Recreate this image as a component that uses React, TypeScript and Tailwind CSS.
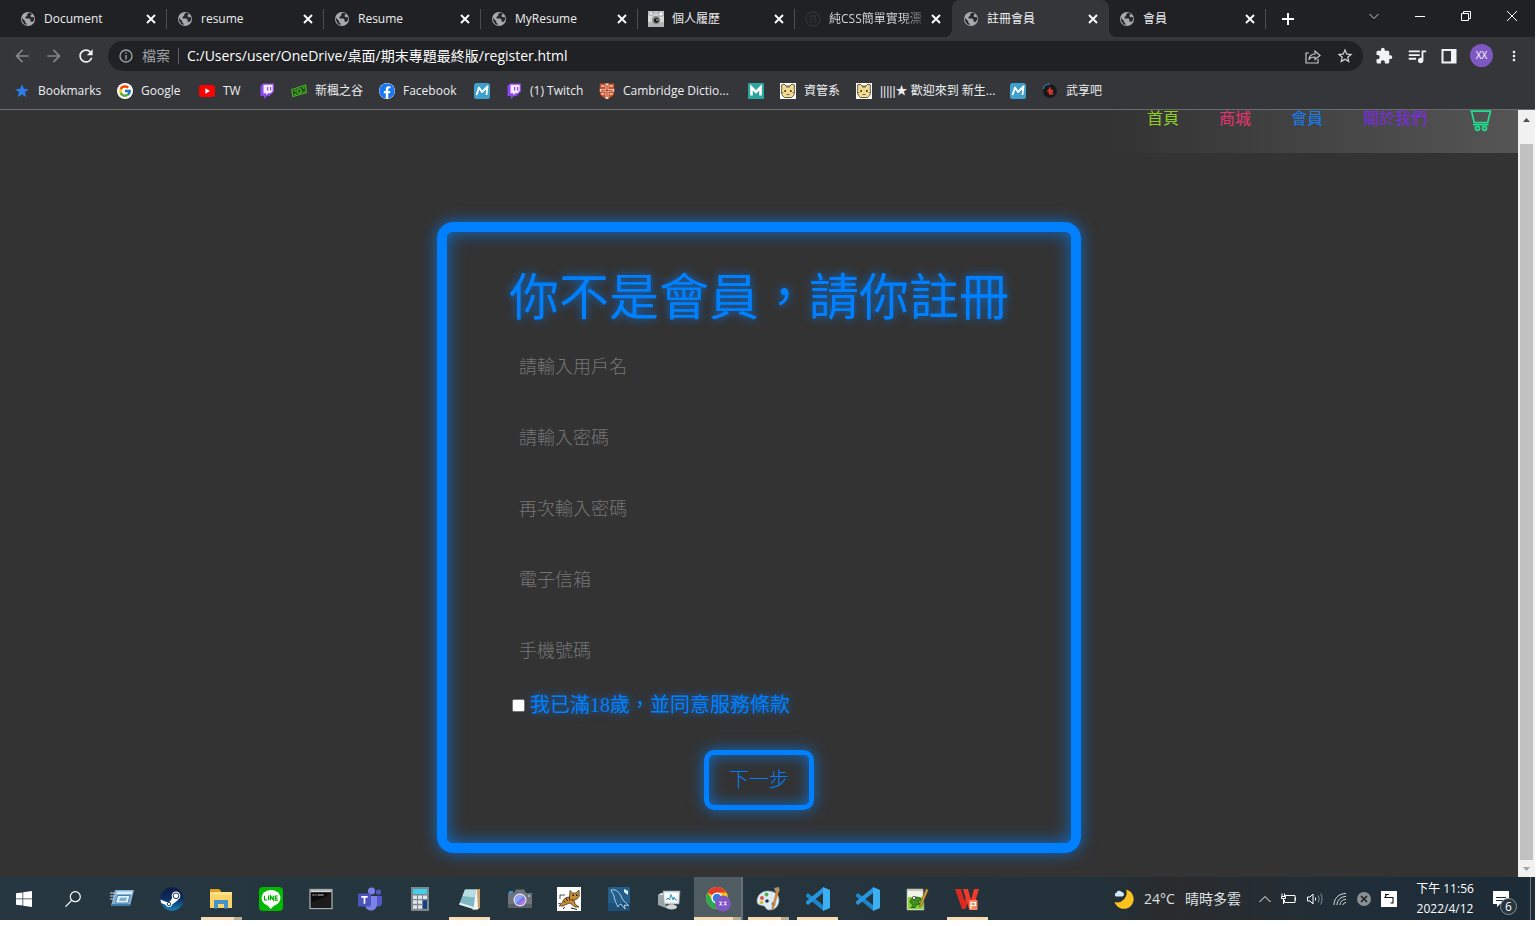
import React from "react";
import { FcGoogle } from "react-icons/fc";
import { FaFacebook } from "react-icons/fa";
import {
  MdArrowBack,
  MdArrowForward,
  MdExtension,
  MdMoreVert,
  MdQueueMusic,
  MdRefresh,
  MdStar,
  MdStarBorder,
} from "react-icons/md";

/* ---------- small drawings ---------- */

const Globe = () => (
  <svg viewBox="0 0 16 16" className="size-4">
    <circle cx="8" cy="8" r="7" fill="#a6a9ad" />
    <path d="M9 1.800 7.200 3.300v1.500L5.500 6v1.500h4l1 1.300v1.700l2 .5 1.700-2.500-.4-2.500-2.300.3-1.300-1.500 1.500-1.300-.4-1.200zM1.900 6.800l3.300 3.400v1.200l1.500 1.300v1.400L4.300 13 2.200 10z" fill="#25272a" />
  </svg>
);

const Cross = () => (
  <svg viewBox="0 0 10 10" className="size-[10px]" stroke="#fff" strokeWidth="1.900">
    <path d="m1 1 8 8M9 1 1 9" />
  </svg>
);

const YouTube = () => (
  <svg viewBox="0 0 16 16" className="size-4">
    <rect x="0" y="2" width="16" height="12" rx="3" fill="#f00" />
    <path d="M6.300 5.300v5.400L11 8z" fill="#fff" />
  </svg>
);

const Camera = () => (
  <svg viewBox="0 0 16 16" className="size-4">
    <rect width="16" height="16" fill="#d8d8d8" />
    <path d="M1 1h4v3H1zM11 1h4v4h-4zM6 0h4v2H6z" fill="#f7f7f7" stroke="#777" strokeWidth=".6" />
    <path d="M0 11h16v5H0z" fill="#b5b5b5" />
    <circle cx="8" cy="9" r="4.2" fill="#8b8b8b" />
    <circle cx="8.3" cy="9.5" r="2.4" fill="#151515" />
    <circle cx="9" cy="9" r=".8" fill="#fff" />
  </svg>
);

const DarkMark = () => (
  <svg viewBox="0 0 16 16" className="size-4" fill="none" stroke="#2f3134" strokeWidth="1.3">
    <circle cx="8" cy="8" r="7" />
    <path d="M4.5 5h7M6 5v7M10 5v7" />
  </svg>
);

const Twitch = () => (
  <svg viewBox="0 0 16 16" className="size-4">
    <path d="M1.500 3 4 .500h11v8L10.500 13H8l-3 3v-3H1.500z" fill="#8d45f0" />
    <path d="M4.500 1.800h9.200v6.300l-2.200 2.200H9.200L7.200 12.300v-2H4.500z" fill="#f2ebff" />
    <path d="M8 4h1.200v3.500H8zM11 4h1.200v3.500H11z" fill="#8d45f0" />
  </svg>
);

const Cash = () => (
  <svg viewBox="0 0 16 16" className="size-4" fill="none" stroke="#4caf2b" strokeWidth="1.300">
    <path d="M.8 6.500 14.500 2l.8 7.500L2 13.500z" fill="#1d4a14" />
    <path d="m3 8 2-.5M3.500 11.500l2-.5M11.500 5l2-.5M12 9l1.700-.5" />
    <circle cx="8.200" cy="8" r="2.100" />
  </svg>
);

const BlueM = () => (
  <svg viewBox="0 0 16 16" className="size-4">
    <rect width="16" height="16" rx="2.500" fill="#3fa0cd" />
    <path d="M2.500 12 5 4.500l3 4.500 5.500-5.500L12.500 12" fill="none" stroke="#fff" strokeWidth="1.800" strokeLinejoin="round" />
  </svg>
);

const TealM = () => (
  <svg viewBox="0 0 16 16" className="size-4">
    <rect width="16" height="16" rx="1" fill="#2aa5a0" />
    <path d="M3.500 12.500v-8L8 9l4.500-4.500v8" fill="none" stroke="#fff" strokeWidth="2.600" />
  </svg>
);

const Shield = () => (
  <svg viewBox="0 0 16 16" className="size-4">
    <path d="M.8.500h14.400v9c0 3-3 5-7.200 6.500C3.800 14.500.8 12.500.8 9.500z" fill="#c9502c" />
    <path d="M6.600.500h2.800V16H6.600zM.8 6h14.400v2.600H.8z" fill="#f4ded2" />
    <path d="M7.400 2h1.200v12H7.400zM2 6.800h12v1H2z" fill="#c03a26" />
    <path d="M2.300 3h3M2.300 11h3M10.700 3h3M10.700 11h3" stroke="#f3d9b0" strokeWidth="1.500" />
  </svg>
);

const Tiger = () => (
  <svg viewBox="0 0 16 16" className="size-4">
    <rect width="16" height="16" fill="#fff" />
    <path d="M1.500 2 4 1l2 2h4l2-2 2.500 1-.3 4c1 3 .3 6.500-2.700 8.500h-7C1.500 12.500.8 9 1.800 6z" fill="#f2db94" stroke="#3a3018" strokeWidth=".8" />
    <path d="M7 3v2M9 3v2M1.800 9.500h1.500M12.700 9.500h1.500" stroke="#5a4720" strokeWidth=".8" />
    <path d="M4.500 7h1.300v2H4.500zM10.200 7h1.300v2h-1.300z" fill="#201808" />
    <path d="M6.500 11.500h3" stroke="#8a5a28" />
  </svg>
);

const RedSwirl = () => (
  <svg viewBox="0 0 16 16" className="size-4">
    <circle cx="8" cy="8" r="7.300" fill="#17181c" stroke="#32353b" strokeWidth="1" />
    <path d="M1.200 6A7 7 0 0 1 8 1" stroke="#3c8fc4" fill="none" />
    <path d="M8 3 6.500 6.500 4.500 8l2 1 .5 3 2.500-.5 2 .500-1-2.500L11.500 7 9 6.500z" fill="#d2342c" />
  </svg>
);

const Windows = () => (
  <svg viewBox="0 0 16 16" className="size-4" fill="#fff">
    <path d="M0 2.300 6.500 1.400v6.200H0zM7.200 1.300 16 0v7.600H7.200zM0 8.300h6.500v6.300L0 13.700zM7.200 8.300H16V16l-8.800-1.300z" />
  </svg>
);

const Search = () => (
  <svg viewBox="0 0 16 16" className="size-4" fill="none" stroke="#fff" strokeWidth="1.200">
    <circle cx="10.300" cy="5.700" r="5" />
    <path d="M6.700 9.300.5 15.700" />
  </svg>
);

const RunWindow = () => (
  <svg viewBox="0 0 24 24" className="size-6">
    <path d="M5 3h19l-4 16H1z" fill="#86b4d8" />
    <path d="M7 4.500h15.500L22 7H6.300z" fill="#d9ecf8" />
    <path d="M7.500 8.500H20l-2 7.500H5.500z" fill="#e8f4fb" stroke="#447fae" />
    <path d="M10 10.500h7l-1 3.500H9z" fill="#7db0d9" />
    <path d="M0 6h5M0 9h4M0 12h3" stroke="#c6ddee" />
    <path d="M1 19h19l.5-2H1.500z" fill="#4177a5" />
  </svg>
);

const Steam = () => (
  <svg viewBox="0 0 24 24" className="size-6">
    <defs>
      <linearGradient id="steamBlue" x1="0" y1="0" x2="0" y2="1">
        <stop offset="0" stopColor="#0f1b45" />
        <stop offset=".5" stopColor="#0d2d63" />
        <stop offset="1" stopColor="#1585bd" />
      </linearGradient>
    </defs>
    <circle cx="12" cy="12" r="11.800" fill="url(#steamBlue)" />
    <path d="M.4 12.500 7 15.200l2.700-.4 3-4.200 5.500 2.500-6 4.300c-.6 3-5.200 3.600-6.400.6L1.200 16z" fill="#fff" />
    <circle cx="16" cy="8.800" r="4.300" fill="#fff" />
    <circle cx="16" cy="8.800" r="2.800" fill="#fff" stroke="#17305f" strokeWidth="1" />
    <circle cx="9" cy="17" r="1.700" fill="none" stroke="#17305f" strokeWidth=".9" />
  </svg>
);

const Folder = () => (
  <svg viewBox="0 0 24 24" className="size-6">
    <path d="M1 2h9l2 2v4H1z" fill="#e0a01e" />
    <path d="M1 5h22v16H1z" fill="#fbd468" />
    <path d="M1 5h22v3H1z" fill="#fddf86" />
    <path d="M5 21.500V13h14v8.500h-4V17H9v4.500z" fill="#4493c9" />
  </svg>
);

const Line = () => (
  <svg viewBox="0 0 24 24" className="size-6">
    <rect width="24" height="24" rx="4" fill="#00b900" />
    <ellipse cx="12" cy="11" rx="9.500" ry="8" fill="#fff" />
    <path d="M8 17.500h8.500L11.500 22z" fill="#fff" />
    <path d="M5.500 8.800v4.200h2.700M9.600 8.500v4.800M11.500 13.300V9l2.800 4V8.700M18.800 9h-2.600v4.200h2.600M16.200 11.100h2.300" fill="none" stroke="#00a800" strokeWidth="1.200" />
  </svg>
);

const Terminal = () => (
  <svg viewBox="0 0 24 24" className="size-6">
    <rect x="1" y="2.500" width="22" height="19" fill="#0a0a0a" stroke="#a9adb0" strokeWidth="1.300" />
    <path d="M1.600 3.200h20.800v2H1.600z" fill="#dcdcdc" />
    <path d="M3.500 8h2M6.500 8h1.200M8.700 8h6" stroke="#cfcfcf" strokeWidth="1" />
    <path d="M2 21V15c6-1 12-4 20-10v16z" fill="#1c1c1c" />
  </svg>
);

const Teams = () => (
  <svg viewBox="0 0 24 24" className="size-6">
    <circle cx="20.500" cy="5" r="2.600" fill="#5059c9" />
    <circle cx="13.500" cy="4" r="3.600" fill="#7b83eb" />
    <path d="M16 9h8v6.500a4 4 0 0 1-8 0z" fill="#5059c9" />
    <path d="M7 9h12v8c0 4-2.500 6.500-6 6.500S7 21 7 17z" fill="#7b83eb" />
    <rect x="0" y="6.500" width="13" height="13" rx="1.300" fill="#4b53bc" />
    <path d="M3.300 9.800h6.400M6.500 9.800v7" stroke="#fff" strokeWidth="1.700" />
  </svg>
);

const Calculator = () => (
  <svg viewBox="0 0 24 24" className="size-6">
    <rect x="3" y="0" width="18" height="24" fill="#7c868d" />
    <rect x="5" y="2" width="14" height="5" fill="#3fd0ee" />
    <path d="M5 8.500h4V12H5zM10 8.500h4V12h-4zM15 8.500h4V12h-4zM5 13.300h4v3.500H5zM10 13.300h4v3.500h-4zM5 18.200h4v3.600H5zM10 18.200h4v3.600h-4z" fill="#dfe6ea" />
    <path d="M15 13.300h4v8.500h-4z" fill="#153f86" />
  </svg>
);

const Notepad = () => (
  <svg viewBox="0 0 24 24" className="size-6">
    <path d="M17 2h5v19l-4 2.500z" fill="#c4a168" />
    <path d="M7 3h12l1 19-5 1z" fill="#f4f6f6" />
    <path d="M7 2.500h11L15.500 22 1 17.500z" fill="#7fbac4" />
    <path d="M7 2.500h11l-1 8L4.500 9z" fill="#b9dde2" />
    <path d="M1 17.500 15.500 22l.3-2L2 15.700z" fill="#e9f1f2" />
  </svg>
);

const CameraApp = () => (
  <svg viewBox="0 0 24 24" className="size-6">
    <path d="M0 6h6l2-3.500h8L18 6h6v15H0z" fill="#6d747a" />
    <path d="M0 17h24v4H0z" fill="#596066" />
    <path d="M1 4h4v2H1z" fill="#2b9be0" />
    <circle cx="12" cy="13" r="6.500" fill="#e8ecf1" />
    <circle cx="12" cy="13" r="5.300" fill="#6f7be8" />
    <path d="M8 16.500a5.300 5.300 0 0 1 7.500-7.300z" fill="#8fa5f8" />
    <path d="M10 17.800a5.300 5.300 0 0 0 7-6.500z" fill="#b873e4" />
    <circle cx="21" cy="9" r=".8" fill="#fff" />
  </svg>
);

const Cat = () => (
  <svg viewBox="0 0 24 24" className="size-6">
    <rect width="24" height="24" fill="#fff" />
    <path d="M13 3.500 15.500 6h3.500l3-3 .3 6-2.300 3-3 1 1 4 4 3h-4l-5-4-4 1.500L6 19H2l3.500-3.500C6 12 9 10 12.500 10z" fill="#c78d35" stroke="#3a2810" strokeWidth=".7" />
    <path d="m9 11 1.500 3M12 10l1 3.500M15 12l1 2M7 14l1.500 1.500" stroke="#2e1d0b" />
    <path d="M15.500 7.500h1.500v1.500h-1.500zM19 7.500h1.500v1.500H19z" fill="#151515" />
    <path d="M3 12V8h5M1 17l3-1" stroke="#222" fill="none" strokeWidth=".8" />
    <path d="m6 22 1.500-2M14 21l6 1.500" stroke="#222" />
  </svg>
);

const MySql = () => (
  <svg viewBox="0 0 24 24" className="size-6">
    <rect x="1" y="0" width="22" height="24" rx="1.500" fill="#245f8c" />
    <path d="M1 16h22v6.500a1.500 1.500 0 0 1-1.500 1.500h-19A1.500 1.500 0 0 1 1 22.500z" fill="#1d5079" />
    <path d="M4 3c4-1 7.500 1.500 9.500 5 1.500 3 2 5.500 5 7.500l3 3-4-.5.500 4-4-5c-2 0-2 2-3 3-2-4-3.500-7-4-11C6.500 7 4.500 5.500 4 3z" fill="none" stroke="#dbe9f4" strokeWidth=".8" />
    <path d="m17 2 4 2v4l-4-3z" fill="#e6f2fa" />
  </svg>
);

const Monitor = () => (
  <svg viewBox="0 0 24 24" className="size-6">
    <path d="M1 8h8v13l-8-3z" fill="#9aa5a9" />
    <path d="m1 8 3-2h7L9 8z" fill="#d7dddf" />
    <path d="M6 4h17l-1 13H7z" fill="#e5eaec" stroke="#8b979d" strokeWidth=".7" />
    <path d="M8 6h13l-.7 9H8.500z" fill="#fafcfd" />
    <path d="m9 13 2-2 1.500 2L14 7.500l2 5.500 1-3 1.500 3H20" fill="none" stroke="#2f94cc" />
    <path d="M12 17h5v2h-5z" fill="#8e999e" />
    <ellipse cx="14.500" cy="20" rx="5.500" ry="2.500" fill="#cfd6d9" />
  </svg>
);

const Chrome = () => (
  <svg viewBox="0 0 26 26" className="size-[26px]">
    <circle cx="12" cy="12" r="11" fill="#fbc116" />
    <path d="M12 12 2.500 6.500A11 11 0 0 1 21.500 6.500H12z" fill="#e33b2e" />
    <path d="M2.500 6.500A11 11 0 0 0 11 23l5-8.500L7 14z" fill="#2da94f" />
    <circle cx="12" cy="12" r="5.600" fill="#fff" />
    <circle cx="12" cy="12" r="4.300" fill="#2f7de1" />
    <circle cx="18" cy="17.500" r="8" fill="#7e57c2" />
    <path d="m14.500 15.500 2.500 4M17 15.500l-2.500 4M19 15.500l2.500 4M21.500 15.500l-2.500 4" stroke="#e6dcf5" strokeWidth="1.100" />
  </svg>
);

const Paint = () => (
  <svg viewBox="0 0 24 24" className="size-6">
    <path d="M12 4c7 0 11 4 11 9s-3 10-10 10c-3 0-3-3-5-4s-7 0-7-5C1 8 6 4 12 4z" fill="#dbeaf3" stroke="#8daec2" strokeWidth=".6" />
    <circle cx="6" cy="11" r="2" fill="#d9534a" />
    <circle cx="10.500" cy="7.500" r="1.900" fill="#4eb04c" />
    <circle cx="5.500" cy="15.500" r="1.800" fill="#e7b62c" />
    <circle cx="17.500" cy="17" r="2" fill="#3678c5" />
    <circle cx="11" cy="14" r="1.800" fill="#25343d" />
    <path d="m21 1 2.500 1.500-6 20-2 .5v-2z" fill="#d2883b" />
    <path d="m18 1 5-1 .5 4-4 1z" fill="#b09066" />
  </svg>
);

const Code = () => (
  <svg viewBox="0 0 24 24" className="size-6">
    <path d="M0 7.800 2 6l15.500 12.500V24L0 9.500z" fill="#1b86cb" />
    <path d="M0 16.200 2 18 17.500 5.500V0L0 14.500z" fill="#2596dd" />
    <path d="M17 0l7 3v18l-7 3z" fill="#3db0f4" />
  </svg>
);

const NotepadPlus = () => (
  <svg viewBox="0 0 24 24" className="size-6">
    <path d="M2 2h16l1 21H2z" fill="#f2f5ec" stroke="#9ba48f" strokeWidth=".7" />
    <path d="M3 10h15l.5 12H3z" fill="#86d233" />
    <path d="M2 2h16v2H2z" fill="#c4cabb" />
    <path d="M5 15c1-5 6-6 10-4l1 2-3 1 2 3-3 .5-2 3H6l2-2z" fill="#3f8e24" stroke="#22500f" strokeWidth=".8" />
    <circle cx="9" cy="11" r="1.600" fill="#fff" stroke="#222" strokeWidth=".7" />
    <path d="M21 1.500 23.500 3 17 18l-2.500 2 .5-3z" fill="#d3a13b" stroke="#4a3511" strokeWidth=".5" />
  </svg>
);

const Wps = () => (
  <svg viewBox="0 0 24 24" className="size-6">
    <path d="M0 2h6l3.500 12L12 7l2 5-3.500 10H7z" fill="#d92a20" />
    <path d="M8 2h5l3 11 3-11h5l-6 20h-4z" fill="#f23a2b" />
    <rect x="14" y="13" width="8.500" height="10" rx="1" fill="#f58a61" />
    <path d="M16 21.500v-6h4.500v3H16" fill="none" stroke="#fff" strokeWidth="1.100" />
  </svg>
);

const Moon = () => (
  <svg viewBox="0 0 20 20" className="size-5">
    <path d="M12 .500a9.800 9.800 0 1 1-11.500 12.500A9.500 9.500 0 0 0 12 .500z" fill="#fcc21e" />
    <path d="M2 7.500a2 2 0 0 1 .5-3.800A2.800 2.800 0 0 1 7.500 3a2.300 2.300 0 0 1 .8 4.500z" fill="#cfe8fa" />
  </svg>
);

const Cart = () => (
  <svg viewBox="0 0 22 22" className="h-[22px] w-[22px]" fill="none" stroke="#1fe08f" strokeWidth="1.700">
    <path d="M.5 1.200h20.500M1.500 1l2.700 11.500h13.500L20.500 1M3 14.700h15.500" />
    <circle cx="7.500" cy="18.300" r="2" />
    <circle cx="14.500" cy="18.300" r="2" />
  </svg>
);

/* ---------- data ---------- */

const tabs: { title: string; icon: React.ReactNode; active?: boolean; line?: boolean; fade?: boolean }[] = [
  { title: "Document", icon: <Globe />, line: true },
  { title: "resume", icon: <Globe />, line: true },
  { title: "Resume", icon: <Globe />, line: true },
  { title: "MyResume", icon: <Globe />, line: true },
  { title: "個人履歷", icon: <Camera />, line: true },
  { title: "純CSS簡單實現漂", icon: <DarkMark />, fade: true },
  { title: "註冊會員", icon: <Globe />, active: true },
  { title: "會員", icon: <Globe />, line: true },
];

const bookmarks: { label?: React.ReactNode; name: string; icon: React.ReactNode; width: string }[] = [
  { name: "Bookmarks", label: "Bookmarks", icon: <MdStar className="size-4 text-[#2b7de9]" />, width: "w-[87px]" },
  { name: "Google", label: "Google", icon: <span className="rounded-full bg-white p-px"><FcGoogle className="size-[14px]" /></span>, width: "w-[66px]" },
  { name: "TW", label: "TW", icon: <YouTube />, width: "w-11" },
  { name: "Twitch", icon: <Twitch />, width: "w-4" },
  { name: "新楓之谷", label: "新楓之谷", icon: <Cash />, width: "w-[72px]" },
  { name: "Facebook", label: "Facebook", icon: <FaFacebook className="size-4 rounded-full bg-white text-[#1877f2]" />, width: "w-[79px]" },
  { name: "M", icon: <BlueM />, width: "w-4" },
  { name: "(1) Twitch", label: "(1) Twitch", icon: <Twitch />, width: "w-[77px]" },
  { name: "Cambridge Dictionary", label: "Cambridge Dictio...", icon: <Shield />, width: "w-[133px]" },
  { name: "M", icon: <TealM />, width: "w-4" },
  { name: "資管系", label: "資管系", icon: <Tiger />, width: "w-[60px]" },
  {
    name: "歡迎來到 新生",
    label: <><span className="font-['Liberation_Sans',sans-serif]">|||||</span>★ 歡迎來到 新生...</>,
    icon: <Tiger />,
    width: "w-[138px]",
  },
  { name: "M", icon: <BlueM />, width: "w-4" },
  { name: "武享吧", label: "武享吧", icon: <RedSwirl />, width: "w-[60px]" },
];

const apps: { name: string; icon: React.ReactNode; open?: boolean; stacked?: boolean; active?: boolean }[] = [
  { name: "Run", icon: <RunWindow /> },
  { name: "Steam", icon: <Steam /> },
  { name: "Explorer", icon: <Folder />, open: true, stacked: true },
  { name: "LINE", icon: <Line /> },
  { name: "Terminal", icon: <Terminal /> },
  { name: "Teams", icon: <Teams /> },
  { name: "Calculator", icon: <Calculator /> },
  { name: "Notepad", icon: <Notepad />, open: true },
  { name: "Camera", icon: <CameraApp /> },
  { name: "Tomcat", icon: <Cat /> },
  { name: "MySQL", icon: <MySql /> },
  { name: "Monitor", icon: <Monitor /> },
  { name: "Chrome", icon: <Chrome />, open: true, stacked: true, active: true },
  { name: "Paint", icon: <Paint />, open: true, stacked: true },
  { name: "VS Code", icon: <Code />, open: true },
  { name: "VS Code 2", icon: <Code /> },
  { name: "Notepad++", icon: <NotepadPlus /> },
  { name: "WPS", icon: <Wps />, open: true },
];

const fields = [
  { id: "username", hint: "請輸入用戶名", type: "text" },
  { id: "password", hint: "請輸入密碼", type: "password" },
  { id: "password-again", hint: "再次輸入密碼", type: "password" },
  { id: "email", hint: "電子信箱", type: "email" },
  { id: "phone", hint: "手機號碼", type: "tel" },
];

/* ---------- browser chrome ---------- */

function TabStrip() {
  return (
    <div className="flex h-[37px] bg-[#202124] pl-[10px]">
      {tabs.map((tab, i) => (
        <div
          key={i}
          className={
            tab.active
              ? "relative flex max-w-[157px] min-w-0 flex-1 items-center rounded-t-lg bg-[#35363a] pr-[11px] pl-[11px] before:absolute before:bottom-0 before:-left-2 before:size-2 before:bg-[radial-gradient(circle_at_0_0,transparent_8px,#35363a_8px)] after:absolute after:-right-2 after:bottom-0 after:size-2 after:bg-[radial-gradient(circle_at_100%_0,transparent_8px,#35363a_8px)]"
              : "flex max-w-[157px] min-w-0 flex-1 items-center pl-[10px]"
          }
        >
          <span className="shrink-0">{tab.icon}</span>
          <span
            className={
              tab.fade
                ? "ml-2 flex-1 overflow-hidden bg-linear-to-r from-[#dfe1e5] from-70% to-[#2a2b2e] bg-clip-text whitespace-nowrap text-transparent"
                : "ml-2 flex-1 overflow-hidden whitespace-nowrap text-[#eceef0]"
            }
          >
            {tab.title}
          </span>
          <button type="button" aria-label={`關閉 ${tab.title}`} className={tab.active ? "shrink-0" : "mr-[11px] shrink-0"}>
            <Cross />
          </button>
          {tab.line && <span className="-ml-px h-5 w-px shrink-0 bg-[#4b4d51]" />}
        </div>
      ))}
      <button type="button" aria-label="新分頁" className="ml-4 self-center">
        <svg viewBox="0 0 12 12" className="size-3" stroke="#fff" strokeWidth="2"><path d="M6 0v12M0 6h12" /></svg>
      </button>
      <div className="ml-auto flex h-8 items-center text-white">
        <button type="button" aria-label="搜尋分頁" className="flex w-[46px] justify-center">
          <svg viewBox="0 0 10 10" className="size-[10px]" fill="none" stroke="#c9cbce"><path d="m.5 3 4.500 4.500L9.500 3" /></svg>
        </button>
        <button type="button" aria-label="最小化" className="flex w-[46px] justify-center">
          <svg viewBox="0 0 10 10" className="size-[10px]" stroke="currentColor"><path d="M0 5.500h10" /></svg>
        </button>
        <button type="button" aria-label="還原" className="flex w-[46px] justify-center">
          <svg viewBox="0 0 10 10" className="size-[10px]" fill="none" stroke="currentColor"><path d="M.5 2.500h7v7h-7zM2.500 2V.500h7v7H8" /></svg>
        </button>
        <button type="button" aria-label="關閉" className="flex w-[46px] justify-center">
          <svg viewBox="0 0 10 10" className="size-[10px]" stroke="currentColor"><path d="m0 0 10 10M10 0 0 10" /></svg>
        </button>
      </div>
    </div>
  );
}

function Toolbar() {
  return (
    <div className="flex h-[37px] items-center bg-[#35363a] pr-[13px] pl-3 text-[#f1f3f4]">
      <button type="button" aria-label="上一頁"><MdArrowBack className="size-5 text-[#84868a]" /></button>
      <button type="button" aria-label="下一頁" className="ml-3"><MdArrowForward className="size-5 text-[#84868a]" /></button>
      <button type="button" aria-label="重新載入" className="ml-3"><MdRefresh className="size-5" /></button>
      <div className="ml-3 flex h-[30px] min-w-0 flex-1 items-center rounded-full bg-[#202124] pr-[9px] pl-[11px] text-sm">
        <svg viewBox="0 0 14 14" className="size-[14px] shrink-0" fill="none" stroke="#9aa0a6" strokeWidth="1.400">
          <circle cx="7" cy="7" r="6" />
          <path d="M7 6v4.500M7 3.300v1.500" />
        </svg>
        <span className="ml-[9px] shrink-0 text-[#9aa0a6]">檔案</span>
        <span className="mx-2 h-4 w-px shrink-0 bg-[#5f6368]" />
        <input
          aria-label="網址"
          defaultValue="C:/Users/user/OneDrive/桌面/期末專題最終版/register.html"
          className="min-w-0 flex-1 bg-transparent text-white outline-none"
        />
        <button type="button" aria-label="分享">
          <svg viewBox="0 0 16 16" className="size-4" fill="none" stroke="#c4c7cb" strokeWidth="1.200">
            <path d="M4 5H1v10h12v-4M4 11c.5-3 2.500-5 6-5V3l5 4.500-5 4V9c-3 0-4.500.5-6 2z" />
          </svg>
        </button>
        <button type="button" aria-label="加入書籤" className="ml-[15px]"><MdStarBorder className="size-[18px] text-[#d5d7da]" /></button>
      </div>
      <div className="ml-3 flex items-center gap-[13px]">
        <button type="button" aria-label="擴充功能"><MdExtension className="size-[18px]" /></button>
        <button type="button" aria-label="媒體"><MdQueueMusic className="size-[22px]" /></button>
        <button type="button" aria-label="側邊面板">
          <svg viewBox="0 0 16 16" className="size-4"><path d="M1.500 2h13v12.500h-13z" fill="none" stroke="#f1f3f4" strokeWidth="2" /><path d="M10 2h5v12.500h-5z" fill="#f1f3f4" /></svg>
        </button>
        <button type="button" aria-label="個人資料" className="size-[23px] rounded-full bg-[#7e57c2] text-[10px] text-white">XX</button>
        <button type="button" aria-label="選單"><MdMoreVert className="size-4" /></button>
      </div>
    </div>
  );
}

function Bookmarks() {
  return (
    <nav aria-label="書籤列" className="flex h-9 items-center gap-4 border-b border-[#6b6c70] bg-[#35363a] pb-px pl-[14px]">
      {bookmarks.map((b, i) => (
        <a key={i} href="#" aria-label={b.name} className={`flex shrink-0 items-center gap-2 whitespace-nowrap text-[#eceef0] ${b.width}`}>
          <span className="flex size-4 shrink-0 items-center justify-center">{b.icon}</span>
          {b.label && <span>{b.label}</span>}
        </a>
      ))}
    </nav>
  );
}

/* ---------- page ---------- */

function Page() {
  return (
    <div className="flex flex-1 bg-[#333]">
      <main className="min-w-0 flex-1">
        <header className="flex h-[43px] justify-end">
          <nav aria-label="主選單" className="flex w-[410px] items-start gap-10 bg-linear-to-r from-[#333] to-[#555] pl-[39px] text-base leading-4">
            <a href="#" className="text-[#8fce22]">首頁</a>
            <a href="#" className="text-[#e8336f]">商城</a>
            <a href="#" className="text-[#137ff5]">會員</a>
            <a href="#" className="text-[#7d2be0]">關於我們</a>
            <a href="#" aria-label="購物車" className="pl-[3px]"><Cart /></a>
          </nav>
        </header>
        <form
          onSubmit={(e) => e.preventDefault()}
          className="mx-auto mt-[69px] mb-6 flex w-full max-w-[644px] flex-col rounded-[16px] border-[10px] border-[#0080ff] px-[62px] pt-[34px] pb-[33px] shadow-[0_0_15px_#0080ffbb,inset_0_0_18px_#0080ffbb]"
        >
          <h1 className="text-center text-[50px] leading-[60px] font-normal whitespace-nowrap text-[#0080ff] [text-shadow:0_0_10px_#0080ffcc]">
            你不是會員，請你註冊
          </h1>
          <div className="mt-5 flex flex-col gap-[31px]">
            {fields.map((f) => (
              <input
                key={f.id}
                id={f.id}
                type={f.type}
                aria-label={f.hint}
                placeholder={f.hint}
                className="h-10 w-full bg-transparent px-[10px] text-lg font-light text-[#0080ff] outline-none placeholder:text-[#767676] placeholder:opacity-100"
              />
            ))}
          </div>
          <div className="mt-5 flex h-[30px] items-center gap-[5px] pl-[3px]">
            <input
              id="agree"
              type="checkbox"
              className="size-[13px] appearance-none rounded-xs border border-[#767676] bg-white checked:bg-[#0080ff]"
            />
            <label htmlFor="agree" className="font-['Liberation_Serif','Noto_Sans_CJK_TC',serif] text-xl font-normal text-[#0080ff] [text-shadow:0_0_8px_#0080ffcc]">
              我已滿18歲，並同意服務條款
            </label>
          </div>
          <button
            type="submit"
            className="mx-auto mt-[30px] h-[60px] w-[110px] rounded-[10px] border-[5px] border-[#0080ff] text-xl font-light text-[#0080ff] shadow-[0_0_15px_#0080ffbb,inset_0_0_15px_#0080ffbb]"
          >
            下一步
          </button>
        </form>
      </main>
      <div aria-hidden="true" className="flex w-[17px] shrink-0 flex-col items-center justify-between bg-[#f1f1f1]">
        <span className="flex h-[19px] items-center"><svg viewBox="0 0 7 4" className="h-1 w-[7px]"><path d="M0 4 3.500 0 7 4z" fill="#505050" /></svg></span>
        <span className="mt-[15px] w-[13px] flex-1 bg-[#c1c1c1]" />
        <span className="flex h-[17px] items-center"><svg viewBox="0 0 7 4" className="h-1 w-[7px]"><path d="m0 0 3.500 4L7 0z" fill="#a3a3a3" /></svg></span>
      </div>
    </div>
  );
}

/* ---------- taskbar ---------- */

function Taskbar() {
  return (
    <footer className="flex h-[43px] items-stretch bg-linear-to-r from-[#263741] via-[#25343c] via-60% to-[#1c2b36] text-white">
      <button type="button" aria-label="開始" className="flex w-12 items-center justify-center"><Windows /></button>
      <button type="button" aria-label="搜尋" className="flex w-[49px] items-center justify-center"><Search /></button>
      <div className="grid w-full max-w-[895px] grid-cols-[repeat(18,minmax(0,1fr))]">
        {apps.map((a) => (
          <button
            key={a.name}
            type="button"
            aria-label={a.name}
            className={a.active ? "flex flex-col items-center border-r-2 border-[#667176] bg-[#4f5d63]" : "flex flex-col items-center"}
          >
            <span className="flex flex-1 items-center pt-[3px]">{a.icon}</span>
            <span className={a.active ? "flex h-[3px] w-full" : "flex h-[3px] w-[41px]"}>
              {a.open && <span className="flex-1 bg-[#f8dbb2]" />}
              {a.stacked && <span className="w-2 bg-[#b9ad92]" />}
            </span>
          </button>
        ))}
      </div>
      <div className="ml-auto flex shrink-0 items-center bg-linear-to-r from-transparent via-[#2a2b2d] via-15% to-transparent to-60%">
        <div className="flex items-center pl-3 text-sm whitespace-nowrap text-[#dfe2e4]">
          <Moon />
          <span className="ml-[10px] w-[41px]">24°C</span>
          <span className="w-[74px]">晴時多雲</span>
        </div>
        <div className="flex w-[138px] items-center justify-between">
          <svg viewBox="0 0 12 8" className="h-2 w-3" fill="none" stroke="#fff"><path d="M.5 7 6 1.500 11.500 7" /></svg>
          <svg viewBox="0 0 16 12" className="h-3 w-4" fill="none" stroke="#fff"><path d="M4 2.500h10v7H3.500V7M14.500 4.500v3M1 .500v3M3.500.500v3M.5 3.500h4v2H.5zM2.500 6v5" /></svg>
          <svg viewBox="0 0 16 14" className="h-[14px] w-4" fill="none" stroke="#fff"><path d="M.5 5v4H3l3 3V2L3 5zM8.500 5.500v3" /><path d="M11 3.500c1.500 2 1.500 5 0 7M13.500 1.500c2 3 2 8 0 11" stroke="#84909a" /></svg>
          <svg viewBox="0 0 14 14" className="size-[14px]" fill="none" stroke="#d8dde0"><path d="M1 13C1 6 6 1.500 13 1.500M4 13c0-5 4-8.500 9-8.500M7 13c0-3.500 2.500-5.500 6-5.500M10 13c0-1.500 1.500-2.500 3-2.500" /></svg>
          <svg viewBox="0 0 14 14" className="size-[14px]"><circle cx="7" cy="7" r="7" fill="#8b9094" /><path d="m4 4 6 6M10 4l-6 6" stroke="#1c252b" strokeWidth="1.700" /></svg>
          <svg viewBox="0 0 16 16" className="size-4"><path d="M0 0h16v16H0z" fill="#fff" /><path d="M4 3.500h4M5.500 3.500 4 6.500h8V12H9.500" fill="none" stroke="#111" strokeWidth="1.100" /></svg>
        </div>
        <div className="w-24 text-center leading-5 whitespace-nowrap">
          <p>下午 11:56</p>
          <p>2022/4/12</p>
        </div>
        <button type="button" aria-label="6 則通知" className="relative w-[37px] self-stretch">
          <svg viewBox="0 0 16 16" className="size-4"><path d="M0 0h16v13H7l-3 3v-3H0z" fill="#fff" /><path d="M3 6.500h10M3 9.500h10" stroke="#1c2b36" strokeWidth="1.100" /></svg>
          <span className="absolute bottom-[5px] left-[7px] flex size-[17px] items-center justify-center rounded-full border border-[#87929a] bg-[#26343d] leading-none">6</span>
        </button>
        <span className="mr-1 w-px self-stretch bg-[#6d7982]" />
      </div>
    </footer>
  );
}

export default function App() {
  return (
    <div className="flex min-h-screen flex-col bg-white pr-px pb-[6px] font-['Open_Sans','Noto_Sans_CJK_TC',sans-serif] text-xs">
      <TabStrip />
      <Toolbar />
      <Bookmarks />
      <Page />
      <Taskbar />
    </div>
  );
}
